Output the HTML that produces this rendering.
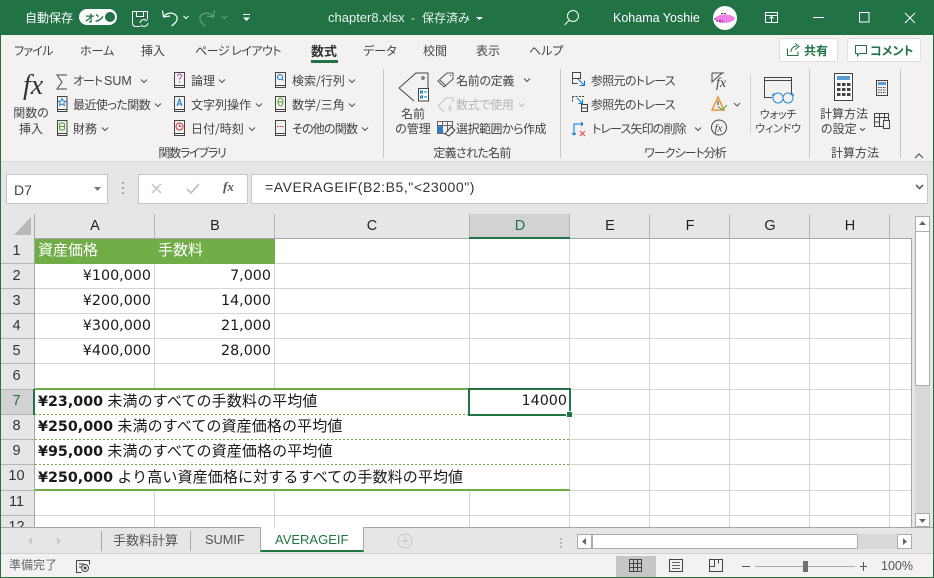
<!DOCTYPE html>
<html lang="ja"><head><meta charset="utf-8"><title>chapter8.xlsx</title>
<style>
html,body{margin:0;padding:0;width:934px;height:578px;overflow:hidden;background:#e6e6e6}
body{font-family:"Liberation Sans","Noto Sans CJK JP",sans-serif;position:relative}
.a{position:absolute}
.t{position:absolute;white-space:nowrap;line-height:16px;height:16px;font-size:12px;color:#444;font-feature-settings:"palt"}
.j{font-family:"Noto Sans CJK JP",sans-serif}
.c{transform:translateX(-50%);text-align:center}
.w{color:#fff}
.b{position:absolute;background:#d4d4d4}
.h{position:absolute;white-space:nowrap;font-size:15px;line-height:20px;height:20px;color:#1a1a1a;font-family:"Liberation Sans","Noto Sans CJK JP",sans-serif}
.h b{font-family:"DejaVu Sans",sans-serif;font-size:14.3px}
.m{letter-spacing:.12px}
.n{font-family:"DejaVu Sans",sans-serif;font-size:14.300px;text-align:right}
.rh{position:absolute;left:0;width:33px;text-align:center;font-size:14.5px;line-height:20px;color:#333}
.ch{position:absolute;top:216px;font-size:14.5px;line-height:20px;color:#222;transform:translateX(-50%)}
svg{position:absolute;overflow:visible}
.tick{fill:none;stroke:#555;stroke-width:1.1}
</style></head><body>

<!-- title bar -->
<div class="a" style="left:0;top:0;width:934px;height:35px;background:#217346"></div>
<div class="t j w" style="left:25px;top:10px;font-size:12px;font-feature-settings:normal">自動保存</div>
<div class="a" style="left:79px;top:9px;width:38px;height:16px;border-radius:8px;background:#fff"></div>
<div class="t j" style="left:85px;top:10px;font-size:10px;color:#217346;font-weight:700">オン</div>
<div class="a" style="left:105px;top:12px;width:10px;height:10px;border-radius:5px;background:#217346"></div>
<svg style="left:0;top:0" width="300" height="35" fill="none" stroke="#fff">
<path d="M132.500 11.500h15v8M132.500 11.500v13l2 2h6M136.500 11.500v5h7v-5" stroke-width="1"/>
<path d="M140 23a4 4 0 0 1 7-2M148 23a4 4 0 0 1-7 2" stroke-width="1"/>
<path d="M162.500 10.500l1 6.500 6.500-1M163.500 17c3-5 10-5 13-1 2 4-1 7-5 10" stroke-width="1.200"/>
<path d="M183.500 16l2.500 2.500 2.500-2.500" stroke-width="1"/>
<path d="M214.500 10.500l-1 6.500-6.500-1M213.500 17c-3-5-10-5-13-1-2 4 1 7 5 10" stroke="#64a283" stroke-width="1.200"/>
<path d="M222 16l2.500 2.500 2.500-2.500" stroke="#64a283" stroke-width="1"/>
<path d="M243 14.500h7" stroke-width="1"/><path d="M243 17.500l3.500 3.500 3.500-3.500z" fill="#fff" stroke="none"/>
</svg>
<div class="t w" style="left:328px;top:10px;font-size:13px;color:#e9f1ed;font-feature-settings:normal">chapter8.xlsx</div>
<div class="t w" style="left:411px;top:10px;font-size:12px;color:#e9f1ed">-</div>
<div class="t j w" style="left:422px;top:10px;font-size:12px;color:#e9f1ed;font-feature-settings:normal">保存済み</div>
<svg style="left:0;top:0" width="934" height="35" fill="none" stroke="#fff">
<path d="M476 17l3.500 3 3.500-3z" fill="#fff" stroke="none"/>
<circle cx="573" cy="16" r="5.500"/><path d="M569 20.500l-4.500 4.500"/>
<rect x="765.500" y="12.500" width="12" height="10"/><path d="M765 15.500h13M771.500 22v-5M769.500 18.500l2-2 2 2"/>
<path d="M813 17.500h11"/><rect x="859.500" y="12.500" width="9.500" height="9.500"/><path d="M905 13l10 10M915 13l-10 10"/>
</svg>
<div class="t w" style="left:613px;top:10px;font-size:12.500px">Kohama Yoshie</div>
<div class="a" style="left:713px;top:6px;width:24px;height:24px;border-radius:12px;background:#fff"></div>
<svg style="left:713px;top:6px" width="24" height="24"><path d="M2 12c3-3 8-4 12-3.500 4 .5 7 2 8 4-1 3-7 4.500-12 4.500-4 0-7-2-8-5z" fill="#f080e8"/><path d="M1 13h2M3 15h7M8 7.500h6" stroke="#000" stroke-width=".8" stroke-dasharray="2 1"/></svg>

<!-- ribbon tabs -->
<div class="a" style="left:1px;top:35px;width:932px;height:127px;background:#f3f2f1;border-bottom:1px solid #d8d8d8;box-sizing:border-box"></div>
<div class="t j" style="left:14px;top:43px;letter-spacing:-.7px">ファイル</div>
<div class="t j" style="left:80px;top:43px">ホーム</div>
<div class="t j" style="left:141px;top:43px">挿入</div>
<div class="t j" style="left:195px;top:43px;letter-spacing:-.5px">ページ レイアウト</div>
<div class="t j" style="left:311px;top:43px;font-weight:700;font-size:13px;color:#333">数式</div>
<div class="a" style="left:311px;top:60px;width:27px;height:3px;background:#217346"></div>
<div class="t j" style="left:363px;top:43px">データ</div>
<div class="t j" style="left:423px;top:43px">校閲</div>
<div class="t j" style="left:476px;top:43px">表示</div>
<div class="t j" style="left:529px;top:43px">ヘルプ</div>
<div class="a" style="left:779px;top:38px;width:59px;height:24px;background:#fff;border:1px solid #e1dfdd;box-sizing:border-box;border-radius:2px"></div>
<div class="t j" style="left:804px;top:43px;font-weight:700;color:#217346">共有</div>
<div class="a" style="left:847px;top:38px;width:74px;height:24px;background:#fff;border:1px solid #e1dfdd;box-sizing:border-box;border-radius:2px"></div>
<div class="t j" style="left:870px;top:43px;font-weight:700;color:#217346">コメント</div>
<svg style="left:0;top:0" width="934" height="70" fill="none" stroke="#217346">
<path d="M787.500 48.500v7h10.500v-4M791 52c0-4 3-6 6-6M795 43.500l4 3-4 3"/>
<path d="M855.500 45.500h11v8h-7l-2 2.500v-2.500h-2z"/>
</svg>

<!-- ribbon separators -->
<div class="b" style="left:383px;top:69px;width:1px;height:89px;background:#c8c6c4"></div>
<div class="b" style="left:560px;top:69px;width:1px;height:89px;background:#c8c6c4"></div>
<div class="b" style="left:750px;top:75px;width:1px;height:58px;background:#d2d0ce"></div>
<div class="b" style="left:809px;top:69px;width:1px;height:89px;background:#c8c6c4"></div>
<div class="b" style="left:900px;top:69px;width:1px;height:89px;background:#c8c6c4"></div>

<!-- group 1 -->
<div class="t" style="left:23px;top:69px;font-family:'Liberation Serif',serif;font-style:italic;font-size:28px;line-height:34px;height:34px;color:#333">fx</div>
<div class="t j c" style="left:31px;top:105px;width:40px">関数の</div>
<div class="t j c" style="left:31px;top:121px;width:40px">挿入</div>
<div class="t j" style="left:73px;top:73px;letter-spacing:-1px">オート</div>
<div class="t" style="left:104px;top:73px;font-size:12.500px">SUM</div>
<div class="t j" style="left:73px;top:97px;letter-spacing:-.55px">最近使った関数</div>
<div class="t j" style="left:73px;top:121px">財務</div>
<div class="t j" style="left:191px;top:73px">論理</div>
<div class="t j" style="left:191px;top:97px">文字列操作</div>
<div class="t j" style="left:191px;top:121px">日付/時刻</div>
<div class="t j" style="left:292px;top:73px">検索/行列</div>
<div class="t j" style="left:292px;top:97px">数学/三角</div>
<div class="t j" style="left:292px;top:121px;letter-spacing:-.8px">その他の関数</div>
<div class="t j c" style="left:192px;top:145px;letter-spacing:-1.200px">関数ライブラリ</div>

<!-- group 2 -->
<div class="t j c" style="left:413px;top:106px">名前</div>
<div class="t j c" style="left:413px;top:121px">の管理</div>
<div class="t j" style="left:456px;top:73px;letter-spacing:-.3px">名前の定義</div>
<div class="t j" style="left:456px;top:97px;color:#b8b6b4;letter-spacing:-.3px">数式で使用</div>
<div class="t j" style="left:456px;top:121px;letter-spacing:-.5px">選択範囲から作成</div>
<div class="t j c" style="left:472px;top:145px;letter-spacing:-.7px">定義された名前</div>

<!-- group 3 -->
<div class="t j" style="left:591px;top:73px;letter-spacing:-.7px">参照元のトレース</div>
<div class="t j" style="left:591px;top:97px;letter-spacing:-.7px">参照先のトレース</div>
<div class="t j" style="left:592px;top:121px;letter-spacing:-.85px">トレース矢印の削除</div>
<div class="t j c" style="left:685px;top:145px;letter-spacing:-1px">ワークシート分析</div>
<div class="t j c" style="left:778px;top:106px;font-size:11px;letter-spacing:-.2px">ウォッチ</div>
<div class="t j c" style="left:778px;top:120px;font-size:11px;letter-spacing:-.2px">ウィンドウ</div>
<div class="t j c" style="left:844px;top:106px">計算方法</div>
<div class="t j" style="left:821px;top:121px">の設定</div>
<div class="t j c" style="left:855px;top:145px">計算方法</div>

<!-- ribbon icons -->
<svg style="left:0;top:0" width="934" height="162" fill="none" stroke="#555">
<path class="tick" d="M141 79.500l3 3 3-3M155 103.500l3 3 3-3M102 127.500l3 3 3-3M219 79.500l3 3 3-3M256 103.500l3 3 3-3M249 127.500l3 3 3-3M349 79.500l3 3 3-3M349 103.500l3 3 3-3M362 127.500l3 3 3-3M524 78.500l3 3 3-3M695 127.500l3 3 3-3M734 103l3 3 3-3M860 128l2.500 2.500 2.500-2.500"/>
<path d="M519 103.500l3 3 3-3" stroke="#bbb"/>
<path d="M67 75h-10l5 7-5 7h10" stroke="#444"/>
<!-- book icons -->
<g stroke="#444">
<path d="M57.500 96.500h9.500v15h-9.500zM57.500 109.500h9.500"/><path d="M57.500 120.500h9.500v15h-9.500zM57.500 133.500h9.500"/>
<path d="M174.500 72.500h10v15h-10zM174.500 85.500h10"/><path d="M174.500 96.500h10v15h-10zM174.500 109.500h10"/><path d="M174.500 120.500h10v15h-10zM174.500 133.500h10"/>
<path d="M275.500 72.500h10v15h-10zM275.500 85.500h10"/><path d="M275.500 96.500h10v15h-10zM275.500 109.500h10"/><path d="M275.500 120.500h10v15h-10zM275.500 133.500h10"/>
</g>
<path d="M62 98.500l1.200 2.500 2.600.2-2 1.700.7 2.600-2.500-1.400-2.500 1.400.7-2.600-2-1.700 2.600-.2z" stroke="#2b88d8"/>
<rect x="59.500" y="123" width="5" height="7" rx="1.500" stroke="#4ea72e"/><path d="M59.500 126.500h5" stroke="#4ea72e"/>
<path d="M177.500 76c0-2.500 4-2.500 4 0 0 1.500-2 1.500-2 3.500M179.500 81v1.500" stroke="#b146c2"/>
<path d="M177 106l2.500-7 2.500 7M178 104h3" stroke="#0078d4"/>
<circle cx="179.500" cy="126.500" r="3.500" stroke="#d13438"/><path d="M179.500 124.500v2h2" stroke="#d13438"/>
<circle cx="280" cy="77" r="2.500" stroke="#0078d4"/><path d="M282 79l1.500 1.500" stroke="#0078d4"/>
<ellipse cx="280.500" cy="102" rx="2.500" ry="4" stroke="#4ea72e"/><path d="M278 102h5" stroke="#4ea72e"/>
<path d="M277 126.500h1.500M279.500 126.500h1.500M282 126.500h1.500" stroke="#d13438"/>
<!-- name manager -->
<path d="M399 88l17-15h12v15M399 88l15 13" stroke="#444"/>
<circle cx="423" cy="78" r="1.200" stroke="#444"/>
<rect x="418.500" y="88.500" width="10" height="12.500" fill="#fff" stroke="#444"/>
<path d="M420.500 91h2v2h-2zM420.500 96h2v2h-2zM424 92h3M424 97h3" stroke="#0078d4"/>
<path d="M438 81l9-8h6v6l-9 8zM440 80l6 6M450 75l1 1" stroke="#555"/>
<path d="M438 106l8-8h7v4M438 106l6 6" stroke="#c2c0be"/><path d="M448 108h4M450 105v7" stroke="#c2c0be"/>
<rect x="437.500" y="121.500" width="15" height="12" stroke="#666"/><path d="M437.500 125.500h15M442.500 121.500v12M447.500 121.500v12" stroke="#666"/>
<rect x="438" y="126" width="5" height="7" fill="#2b7cd3" stroke="none"/>
<path d="M445 134l6-7 4 3-6 6z" fill="#f3f2f1" stroke="#444"/>
<!-- audit -->
<path d="M572.500 72.500h8v6h-8zM572.500 78.500v5h5" stroke="#444"/>
<path d="M578 79l6 6M584.500 80.500v5h-5" stroke="#0078d4"/>
<path d="M572.500 96.500h5M572.500 96.500v5M579 96.500h5" stroke="#444" stroke-dasharray="2 1"/><path d="M577 98l5 5M582.500 99.500v4h-4" stroke="#0078d4"/><path d="M581.500 104.500h6v7h-6zM581.500 108h6" stroke="#444"/>
<path d="M574 135v-11h9M574 135l-2-2M574 135l2-2M583 124l-2-2M583 124l-2 2" stroke="#0078d4"/><path d="M580 131l5 5M585 131l-5 5" stroke="#e8463a"/>
<path d="M712 73h12M712 73v9l10-9" stroke="#444"/>
<text x="716" y="87" font-family="Liberation Serif" font-style="italic" font-size="14" fill="#444" stroke="none">fx</text>
<path d="M712 110l6-13 6 13z" stroke="#e8963a" stroke-width="1.500"/><path d="M718 101v4M718 106.500v1" stroke="#333"/><path d="M719 107l3 3 5-5" stroke="#4ea72e"/>
<circle cx="719" cy="127.500" r="7.500" stroke="#444"/>
<text x="714.500" y="131.500" font-family="Liberation Serif" font-style="italic" font-size="11" fill="#444" stroke="none">fx</text>
<!-- watch -->
<path d="M772 97.500h-7.500v-20h27v17M764.500 80.500h27" stroke="#444"/>
<circle cx="778" cy="98" r="5" stroke="#2b88d8"/><circle cx="788" cy="98" r="5" stroke="#2b88d8"/><path d="M772 96l2-3M794 96l-2-3" stroke="#2b88d8"/>
<!-- calc -->
<rect x="834.500" y="73.500" width="18" height="27" stroke="#444" fill="#fff"/><rect x="837" y="76" width="13" height="4" fill="#5b9bd5" stroke="none"/>
<g fill="#444" stroke="none"><rect x="837" y="83" width="3.500" height="3"/><rect x="842" y="83" width="3.500" height="3"/><rect x="847" y="83" width="3.500" height="3"/><rect x="837" y="88" width="3.500" height="3"/><rect x="842" y="88" width="3.500" height="3"/><rect x="847" y="88" width="3.500" height="3"/><rect x="837" y="93" width="3.500" height="3"/><rect x="842" y="93" width="3.500" height="3"/><rect x="847" y="93" width="3.500" height="3"/></g>
<rect x="876.500" y="80.500" width="11" height="15" stroke="#444"/><rect x="878" y="82" width="8" height="3" fill="#5b9bd5" stroke="none"/><path d="M878 87.500h8M878 90h8M878 92.500h8" stroke="#444" stroke-dasharray="1.500 1"/>
<rect x="874.500" y="113.500" width="14" height="13" stroke="#444"/><path d="M874.500 117.500h14M879.500 113.500v13M884.500 113.500v6M874.500 122h5" stroke="#444"/><rect x="883.500" y="120.500" width="6" height="8" fill="#f3f2f1" stroke="#444"/>
<path d="M915 158l4-4 4 4" stroke="#444"/>
</svg>

<!-- formula bar -->
<div class="a" style="left:1px;top:162px;width:932px;height:52px;background:#e6e6e6"></div>
<div class="a" style="left:6px;top:174px;width:102px;height:30px;background:#fff;border:1px solid #c6c6c6;box-sizing:border-box"></div>
<div class="t" style="left:14px;top:182px;font-size:14px;color:#444">D7</div>
<svg style="left:0;top:162px" width="934" height="52" fill="none">
<path d="M94 25h7l-3.500 4z" fill="#777"/>
<path d="M123 20v2M123 25v2M123 30v2" stroke="#a6a6a6" stroke-width="2"/>
</svg>
<div class="a" style="left:138px;top:174px;width:110px;height:30px;background:#fff;border:1px solid #c6c6c6;box-sizing:border-box"></div>
<svg style="left:0;top:162px" width="300" height="52" fill="none">
<path d="M152 22l9 9M161 22l-9 9" stroke="#c2c2c2" stroke-width="1.500"/>
<path d="M187 27l4 4 8-9" stroke="#c2c2c2" stroke-width="1.800"/>
</svg>
<div class="t" style="left:223px;top:179px;font-family:'Liberation Serif',serif;font-style:italic;font-weight:700;font-size:13px;color:#555">fx</div>
<div class="a" style="left:251px;top:174px;width:677px;height:30px;background:#fff;border:1px solid #c6c6c6;box-sizing:border-box"></div>
<div class="t" style="left:265px;top:179px;font-size:14px;color:#333;letter-spacing:.55px;line-height:17px">=AVERAGEIF(B2:B5,"&lt;23000")</div>
<svg style="left:0;top:162px" width="934" height="52" fill="none"><path d="M916 23l3.500 3.500 3.500-3.500" stroke="#666" stroke-width="1.800"/></svg>

<!-- grid background -->
<div class="a" style="left:35px;top:239px;width:877px;height:288px;background:#fff"></div>
<svg style="left:0;top:0" width="934" height="578" shape-rendering="crispEdges" fill="none" stroke="#d4d4d4">
<path d="M154.500 239v288M274.500 239v288M469.500 239v288M569.500 239v288M649.500 239v288M729.500 239v288M809.500 239v288M889.500 239v288"/>
<path d="M35 263.500h877M35 288.500h877M35 313.500h877M35 338.500h877M35 363.500h877M35 389.500h877M35 414.500h877M35 439.500h877M35 464.500h877M35 490.500h877M35 515.500h877"/>
<!-- header separators -->
<path d="M154.500 214v24M274.500 214v24M469.500 214v24M569.500 214v24M649.500 214v24M729.500 214v24M809.500 214v24M889.500 214v24" stroke="#b5b5b5"/>
<path d="M1 263.500h33M1 288.500h33M1 313.500h33M1 338.500h33M1 363.500h33M1 389.500h33M1 414.500h33M1 439.500h33M1 464.500h33M1 490.500h33M1 515.500h33" stroke="#b5b5b5"/>
<path d="M34.500 214v313" stroke="#a6a6a6"/>
<path d="M35 238.500h877" stroke="#a6a6a6"/>
<path d="M911.500 238v289" stroke="#a6a6a6"/>
</svg>
<svg style="left:0;top:0" width="40" height="240"><path d="M31 217v18H14z" fill="#b8b8b8"/></svg>

<!-- column headers -->
<div class="ch" style="left:95px">A</div>
<div class="ch" style="left:215px">B</div>
<div class="ch" style="left:372px">C</div>
<div class="a" style="left:470px;top:214px;width:99px;height:23px;background:#d2d2d2"></div>
<div class="a" style="left:469px;top:237px;width:101px;height:2px;background:#217346"></div>
<div class="ch" style="left:520px;color:#217346">D</div>
<div class="ch" style="left:610px">E</div>
<div class="ch" style="left:690px">F</div>
<div class="ch" style="left:770px">G</div>
<div class="ch" style="left:850px">H</div>

<!-- row headers -->
<div class="rh" style="top:241px">1</div>
<div class="rh" style="top:266px">2</div>
<div class="rh" style="top:291px">3</div>
<div class="rh" style="top:316px">4</div>
<div class="rh" style="top:341px">5</div>
<div class="rh" style="top:366px">6</div>
<div class="a" style="left:1px;top:390px;width:32px;height:24px;background:#d2d2d2"></div>
<div class="a" style="left:33px;top:389px;width:2px;height:26px;background:#217346"></div>
<div class="rh" style="top:391px;color:#217346">7</div>
<div class="rh" style="top:416px">8</div>
<div class="rh" style="top:441px">9</div>
<div class="rh" style="top:466px">10</div>
<div class="rh" style="top:492px">11</div>
<div class="a" style="left:0;top:516px;width:33px;height:11px;overflow:hidden"><div class="rh" style="top:1px">12</div></div>

<!-- cells -->
<div class="a" style="left:35px;top:239px;width:240px;height:25px;background:#70ad47"></div>
<div class="h" style="left:38px;top:241px;color:#fff">資産価格</div>
<div class="h" style="left:158px;top:241px;color:#fff">手数料</div>
<div class="h n" style="left:35px;width:116px;top:266px">¥100,000</div>
<div class="h n" style="left:155px;width:116px;top:266px">7,000</div>
<div class="h n" style="left:35px;width:116px;top:291px">¥200,000</div>
<div class="h n" style="left:155px;width:116px;top:291px">14,000</div>
<div class="h n" style="left:35px;width:116px;top:316px">¥300,000</div>
<div class="h n" style="left:155px;width:116px;top:316px">21,000</div>
<div class="h n" style="left:35px;width:116px;top:341px">¥400,000</div>
<div class="h n" style="left:155px;width:116px;top:341px">28,000</div>

<!-- merged rows: clear gridlines -->
<div class="a" style="left:35px;top:389px;width:534px;height:101px;background:#fff"></div>
<div class="a" style="left:35px;top:388px;width:535px;height:2px;background:#70ad47"></div>
<div class="a" style="left:35px;top:489px;width:535px;height:2px;background:#70ad47"></div>
<svg style="left:0;top:0" width="600" height="500" shape-rendering="crispEdges"><path d="M35 414.500h534M35 439.500h534M35 464.500h534" stroke="#70ad47" stroke-dasharray="2 2"/></svg>
<div class="h m" style="left:38px;top:392px"><b style="letter-spacing:0">¥23,000</b> 未満のすべての手数料の平均値</div>
<div class="h m" style="left:38px;top:417px"><b style="letter-spacing:0">¥250,000</b> 未満のすべての資産価格の平均値</div>
<div class="h m" style="left:38px;top:442px"><b style="letter-spacing:0">¥95,000</b> 未満のすべての資産価格の平均値</div>
<div class="h m" style="left:38px;top:468px"><b style="letter-spacing:0">¥250,000</b> より高い資産価格に対するすべての手数料の平均値</div>

<!-- active cell -->
<div class="a" style="left:468px;top:388px;width:103px;height:28px;border:2px solid #217346;box-sizing:border-box"></div>
<div class="h n" style="left:470px;width:97px;top:391px">14000</div>
<div class="a" style="left:566px;top:411px;width:7px;height:7px;background:#217346;border:1px solid #fff;box-sizing:border-box"></div>

<!-- vertical scrollbar -->
<div class="a" style="left:915px;top:216px;width:15px;height:311px;background:#d9d9d9"></div>
<div class="a" style="left:915px;top:216px;width:15px;height:16px;background:#fff;border:1px solid #ababab;box-sizing:border-box"></div>
<div class="a" style="left:915px;top:231px;width:15px;height:155px;background:#fff;border:1px solid #ababab;box-sizing:border-box"></div>
<div class="a" style="left:915px;top:513px;width:15px;height:14px;background:#fff;border:1px solid #ababab;box-sizing:border-box"></div>
<svg style="left:0;top:0" width="934" height="578"><path d="M919 225h7l-3.500-4zM919 519h7l-3.500 4z" fill="#666"/></svg>

<!-- tabs -->
<div class="a" style="left:1px;top:527px;width:932px;height:26px;background:#e6e6e6;border-top:1px solid #a6a6a6;box-sizing:border-box"></div>
<div class="a" style="left:1px;top:553px;width:932px;height:1px;background:#d0d0d0"></div>
<svg style="left:0;top:527px" width="600" height="26"><path d="M32 10v8l-4-4zM57 10v8l4-4z" fill="#c8c8c8"/><path d="M101.500 4v20M190.500 4v20" stroke="#a6a6a6"/><circle cx="405" cy="14" r="7" fill="none" stroke="#c4c4c4"/><path d="M401 14h8M405 10v8" stroke="#c4c4c4"/></svg>
<div class="t j" style="left:113px;top:532px;font-size:13px;color:#555">手数料計算</div>
<div class="t" style="left:205px;top:532px;font-size:12.800px;color:#555">SUMIF</div>
<div class="a" style="left:260px;top:527px;width:104px;height:25px;background:#fff;border-left:1px solid #a6a6a6;border-right:1px solid #a6a6a6;border-bottom:2px solid #217346;box-sizing:border-box"></div>
<div class="t" style="left:275px;top:532px;font-size:13px;color:#217346">AVERAGEIF</div>

<!-- h scrollbar -->
<div class="a" style="left:577px;top:534px;width:335px;height:15px;background:#d9d9d9"></div>
<div class="a" style="left:577px;top:534px;width:15px;height:15px;background:#fff;border:1px solid #ababab;box-sizing:border-box"></div>
<div class="a" style="left:592px;top:534px;width:266px;height:15px;background:#fff;border:1px solid #ababab;box-sizing:border-box"></div>
<div class="a" style="left:897px;top:534px;width:15px;height:15px;background:#fff;border:1px solid #ababab;box-sizing:border-box"></div>
<svg style="left:0;top:0" width="934" height="578"><path d="M586 538v7l-4-3.500zM903 538v7l4-3.500z" fill="#666"/><path d="M561 538v2M561 542v2M561 546v2" stroke="#b8b8b8" stroke-width="2"/></svg>

<!-- status bar -->
<div class="a" style="left:1px;top:554px;width:932px;height:23px;background:#f3f2f1"></div>
<div class="t j" style="left:9px;top:557px;font-size:12px;color:#666">準備完了</div>
<div class="a" style="left:616px;top:556px;width:40px;height:21px;background:#c6c6c6"></div>
<svg style="left:0;top:0" width="934" height="578" fill="none" stroke="#444" shape-rendering="crispEdges">
<path d="M76.500 560.500h13v4M76.500 560.500v12h5M79 564h5M79 567h3"/><circle cx="85" cy="568" r="3.500" shape-rendering="auto"/><circle cx="85" cy="568" r="1.500" fill="#444" stroke="none" shape-rendering="auto"/>
<rect x="629.500" y="559.500" width="12" height="12"/><path d="M633.500 559.500v12M637.500 559.500v12M629.500 563.500h12M629.500 567.500h12"/>
<rect x="669.500" y="559.500" width="13" height="12"/><path d="M672 562.500h8M672 565.500h8M672 568.500h8" stroke="#666"/>
<rect x="709.500" y="559.500" width="13" height="12"/><path d="M709.500 566.500h5v-7M718.500 559.500v4" />
<path d="M742 566.500h8M860 566.500h7M863.500 562v9" stroke="#555"/>
<path d="M755 566.500h100" stroke="#aaa"/>
</svg>
<div class="a" style="left:803px;top:561px;width:5px;height:11px;background:#707070"></div>
<div class="t" style="left:881px;top:558px;font-size:12.500px;color:#555">100%</div>

<!-- window border -->
<div class="a" style="left:0;top:35px;width:1px;height:543px;background:#217346"></div>
<div class="a" style="left:933px;top:35px;width:1px;height:543px;background:#217346"></div>
<div class="a" style="left:0;top:577px;width:934px;height:1px;background:#217346"></div>
</body></html>
